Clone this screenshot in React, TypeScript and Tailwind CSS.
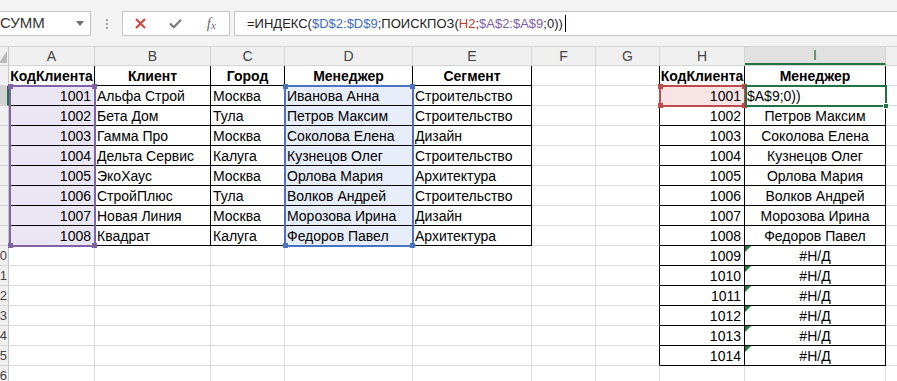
import React from "react";

type Col = { k: string; w: string };
const cols: Col[] = [
  { k: "A", w: "w-[86px]" },
  { k: "B", w: "w-[116px]" },
  { k: "C", w: "w-[74px]" },
  { k: "D", w: "w-[128px]" },
  { k: "E", w: "w-[119px]" },
  { k: "F", w: "w-[64px]" },
  { k: "G", w: "w-[64px]" },
  { k: "H", w: "w-[85px]" },
  { k: "I", w: "w-[141px]" },
  { k: "", w: "w-[60px]" },
];

const t1: string[][] = [
  ["КодКлиента", "Клиент", "Город", "Менеджер", "Сегмент"],
  ["1001", "Альфа Строй", "Москва", "Иванова Анна", "Строительство"],
  ["1002", "Бета Дом", "Тула", "Петров Максим", "Строительство"],
  ["1003", "Гамма Про", "Москва", "Соколова Елена", "Дизайн"],
  ["1004", "Дельта Сервис", "Калуга", "Кузнецов Олег", "Строительство"],
  ["1005", "ЭкоХаус", "Москва", "Орлова Мария", "Архитектура"],
  ["1006", "СтройПлюс", "Тула", "Волков Андрей", "Строительство"],
  ["1007", "Новая Линия", "Москва", "Морозова Ирина", "Дизайн"],
  ["1008", "Квадрат", "Калуга", "Федоров Павел", "Архитектура"],
];

const iVals = [
  "Менеджер",
  "$A$9;0))",
  "Петров Максим",
  "Соколова Елена",
  "Кузнецов Олег",
  "Орлова Мария",
  "Волков Андрей",
  "Морозова Ирина",
  "Федоров Павел",
  "#Н/Д",
  "#Н/Д",
  "#Н/Д",
  "#Н/Д",
  "#Н/Д",
  "#Н/Д",
];

function inTable(r: number, c: number) {
  return (r >= 1 && r <= 9 && c >= 0 && c <= 4) || (r >= 1 && r <= 15 && c >= 7 && c <= 8);
}

type CellInfo = { text: string; align: string; bold: boolean; bg: string; tri: boolean };

function cellInfo(r: number, c: number): CellInfo {
  const info: CellInfo = { text: "", align: "justify-start pl-[2px]", bold: false, bg: "", tri: false };
  if (r >= 1 && r <= 9 && c <= 4) {
    info.text = t1[r - 1][c];
    if (r === 1) {
      info.bold = true;
      info.align = "justify-center";
    } else if (c === 0) {
      info.align = "justify-end pr-[3px]";
      info.bg = "bg-[#ebe6f4]";
    } else if (c === 3) {
      info.bg = "bg-[#e8eef9]";
    }
  }
  if (r >= 1 && r <= 15 && c === 7) {
    if (r === 1) {
      info.text = "КодКлиента";
      info.bold = true;
      info.align = "justify-center";
    } else {
      info.text = String(999 + r);
      info.align = "justify-end pr-[3px]";
      if (r === 2) info.bg = "bg-[#f9e4e5]";
    }
  }
  if (r >= 1 && r <= 15 && c === 8) {
    info.text = iVals[r - 1];
    if (r === 1) {
      info.bold = true;
      info.align = "justify-center";
    } else if (r === 2) {
      info.align = "justify-start pl-[2px]";
    } else {
      info.align = "justify-center";
    }
    if (r >= 10) info.tri = true;
  }
  return info;
}

function Corner({ pos, color }: { pos: string; color: string }) {
  return <span className={`absolute w-[5px] h-[5px] ${pos} ${color}`} />;
}

export default function App() {
  const rows = Array.from({ length: 16 }, (_, i) => i + 1);
  return (
    <div className="relative w-[897px] h-[381px] overflow-hidden bg-white font-['Liberation_Sans',Arial,sans-serif] text-black">
      {/* formula bar */}
      <div className="h-[47px] bg-[#f3f3f3] border-b border-[#d5d5d5] flex items-start pt-[11px]">
        <div className="-ml-[12px] w-[103px] h-[25px] shrink-0 bg-white border border-[#c6c6c6] flex items-center pl-[11px] text-[15px] text-[#333]">
          <span>СУММ</span>
          <svg className="ml-auto mr-[6px]" width="8" height="5" viewBox="0 0 8 5">
            <path d="M0 0 L8 0 L4 5 Z" fill="#707070" />
          </svg>
        </div>
        <div className="w-[31px] h-[25px] shrink-0 flex flex-col items-center justify-center gap-[2px]">
          <span className="w-[2px] h-[2px] bg-[#a8a8a8]" />
          <span className="w-[2px] h-[2px] bg-[#a8a8a8]" />
          <span className="w-[2px] h-[2px] bg-[#a8a8a8]" />
        </div>
        <div className="w-[108px] h-[25px] shrink-0 bg-white border border-[#c6c6c6] flex items-center">
          <div className="w-[36px] flex justify-center">
            <svg width="11" height="11" viewBox="0 0 11 11">
              <path d="M1 1 L10 10 M10 1 L1 10" stroke="#d9413a" strokeWidth="2" />
            </svg>
          </div>
          <div className="w-[36px] flex justify-center">
            <svg width="13" height="11" viewBox="0 0 13 11">
              <path d="M1 5.5 L4.8 9.3 L12 1.8" stroke="#7a7a7a" strokeWidth="2.2" fill="none" />
            </svg>
          </div>
          <div className="w-[36px] flex justify-center font-['Liberation_Serif',serif] italic text-[#6a6a6a] text-[15px] leading-none">
            <span>f</span>
            <span className="text-[11px] mt-[4px]">x</span>
          </div>
        </div>
        <div className="ml-[4px] flex-1 h-[25px] bg-white border border-[#c6c6c6] border-r-0 flex items-center pl-[12px] text-[13px] text-[#222] whitespace-nowrap">
          <span>=ИНДЕКС(</span>
          <span className="text-[#3d6cc0]">$D$2:$D$9</span>
          <span>;ПОИСКПОЗ(</span>
          <span className="text-[#c0392b]">H2</span>
          <span>;</span>
          <span className="text-[#7f5ea8]">$A$2:$A$9</span>
          <span>;0))</span>
          <span className="ml-[2px] w-px h-[17px] bg-black" />
        </div>
      </div>

      {/* column headers */}
      <div className="flex h-[19px] bg-[#f0f0f0] border-b border-[#d4d4d4] text-[14px] text-[#444]">
        <div className="w-[9px] shrink-0 h-full border-r border-[#c6c6c6] relative overflow-hidden">
          <svg className="absolute right-[1px] bottom-[2px]" width="8" height="12" viewBox="0 0 8 12">
            <path d="M8 0 L8 12 L0 12 Z" fill="#b9b9b9" />
          </svg>
        </div>
        {cols.map((c, i) => (
          <div
            key={i}
            className={`${c.w} shrink-0 h-full border-r border-[#d4d4d4] flex items-center justify-center ${
              c.k === "I" ? "bg-[#e1e1e1] text-[#217346] border-b-2 border-b-[#217346]" : ""
            }`}
          >
            {c.k}
          </div>
        ))}
      </div>

      {/* grid body */}
      <div className="relative text-[14px]">
        {rows.map((r) => (
          <div key={r} className="flex h-[20px]">
            <div
              className={`w-[9px] shrink-0 h-full border-b border-[#d4d4d4] flex items-center justify-end overflow-hidden whitespace-nowrap text-[13px] pr-[1px] ${
                r === 2
                  ? "bg-[#d2d2d2] border-r-2 border-r-[#217346] text-[#217346]"
                  : "bg-[#f0f0f0] border-r border-r-[#c6c6c6] text-[#444]"
              }`}
            >
              {r >= 10 ? String(r % 10) : ""}
            </div>
            {cols.map((col, c) => {
              const info = cellInfo(r, c);
              const rb = inTable(r, c) || inTable(r, c + 1);
              const bb = inTable(r, c) || inTable(r + 1, c);
              return (
                <div
                  key={c}
                  className={`${col.w} shrink-0 h-full relative border-r border-b flex items-center pt-[2px] overflow-hidden whitespace-nowrap ${
                    rb ? "border-r-black" : "border-r-[#dadada]"
                  } ${bb ? "border-b-black" : "border-b-[#dadada]"} ${info.bg} ${info.align} ${
                    info.bold ? "font-bold" : ""
                  }`}
                >
                  {info.tri && (
                    <span className="absolute left-0 top-0 w-0 h-0 border-t-[6px] border-r-[6px] border-t-[#1e7b34] border-r-transparent" />
                  )}
                  {info.text}
                </div>
              );
            })}
          </div>
        ))}

        {/* purple range A2:A9 */}
        <div className="absolute left-[9px] top-[19px] w-[87px] h-[162px] border-2 border-[#7f62a8]">
          <Corner pos="-left-[3px] -top-[3px]" color="bg-[#7f62a8]" />
          <Corner pos="-right-[3px] -top-[3px]" color="bg-[#7f62a8]" />
          <Corner pos="-left-[3px] -bottom-[3px]" color="bg-[#7f62a8]" />
          <Corner pos="-right-[3px] -bottom-[3px]" color="bg-[#7f62a8]" />
        </div>
        {/* blue range D2:D9 */}
        <div className="absolute left-[284px] top-[19px] w-[130px] h-[162px] border-2 border-[#4a73c0]">
          <Corner pos="-left-[3px] -top-[3px]" color="bg-[#4a73c0]" />
          <Corner pos="-right-[3px] -top-[3px]" color="bg-[#4a73c0]" />
          <Corner pos="-left-[3px] -bottom-[3px]" color="bg-[#4a73c0]" />
          <Corner pos="-right-[3px] -bottom-[3px]" color="bg-[#4a73c0]" />
        </div>
        {/* red H2 */}
        <div className="absolute left-[659px] top-[19px] w-[87px] h-[22px] border-2 border-[#bf4b4f]">
          <Corner pos="-left-[3px] -top-[3px]" color="bg-[#bf4b4f]" />
          <Corner pos="-right-[3px] -top-[3px]" color="bg-[#bf4b4f]" />
          <Corner pos="-left-[3px] -bottom-[3px]" color="bg-[#bf4b4f]" />
          <Corner pos="-right-[3px] -bottom-[3px]" color="bg-[#bf4b4f]" />
        </div>
        {/* active I2 */}
        <div className="absolute left-[745px] top-[19px] w-[142px] h-[22px] border-2 border-[#217346]">
          <span className="absolute -right-[4px] -bottom-[4px] w-[6px] h-[6px] bg-[#217346] border border-white" />
        </div>
      </div>
    </div>
  );
}
